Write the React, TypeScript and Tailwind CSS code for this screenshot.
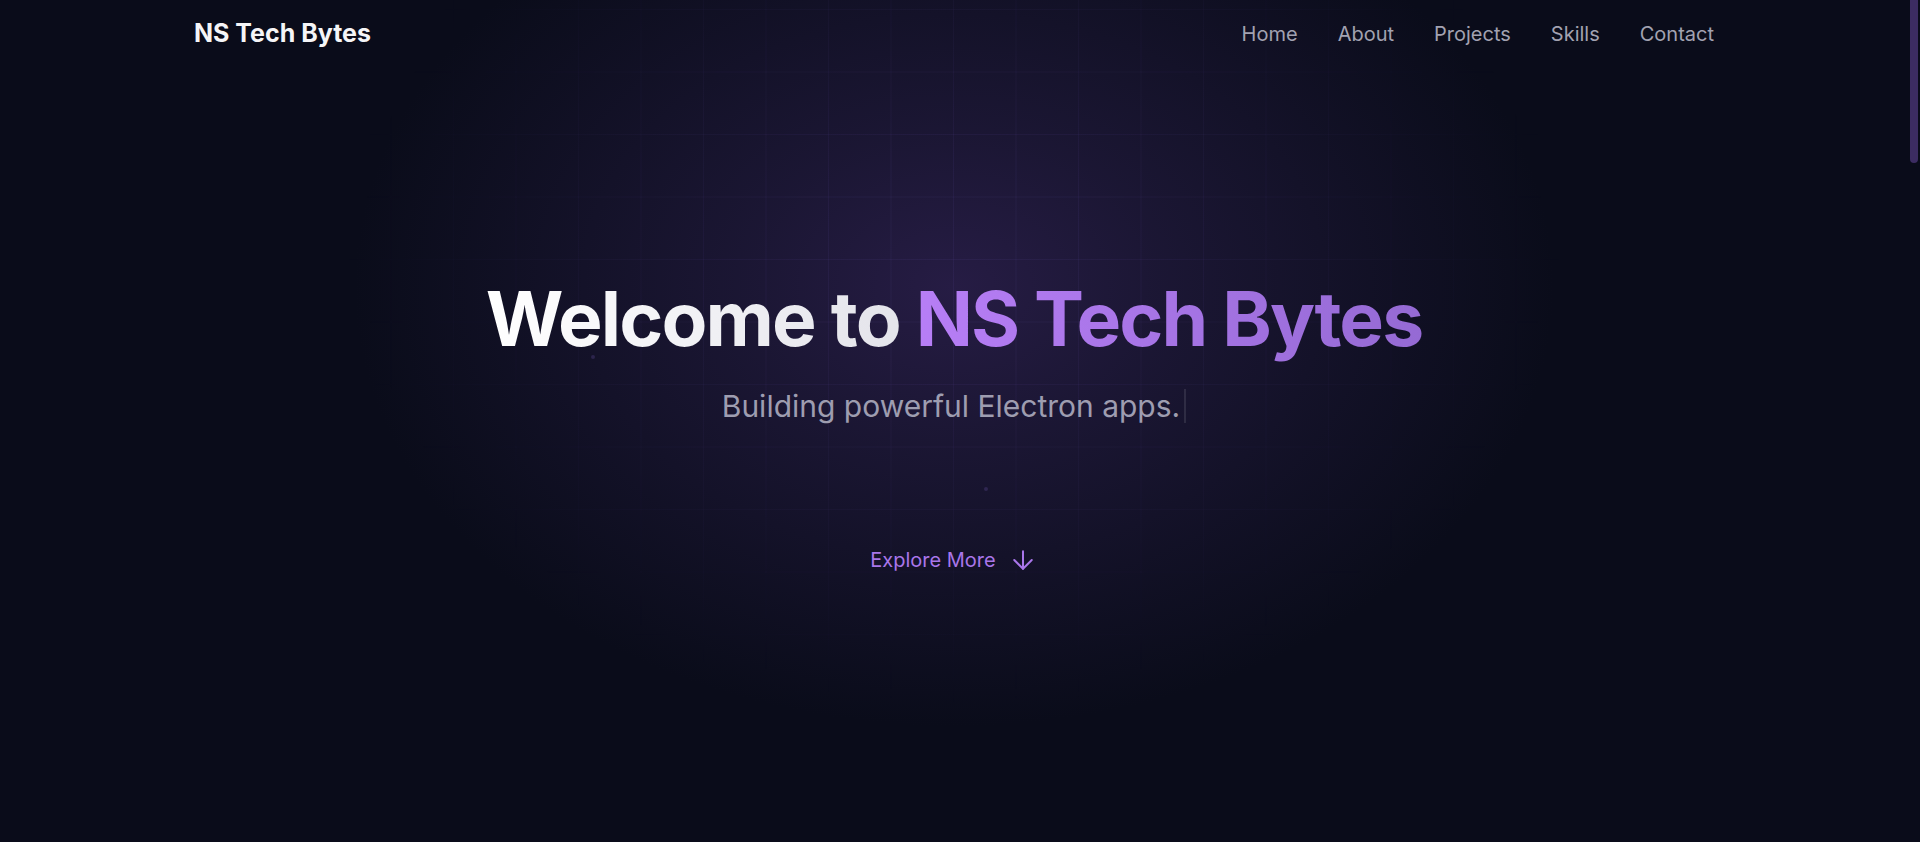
import React from 'react';
import { ArrowDown } from 'lucide-react';

const links = ['Home', 'About', 'Projects', 'Skills', 'Contact'];

// Puntitos decorativos del fondo (muy tenues)
const dots = [
    { top: 'top-[487px]', left: 'left-[984px]' },
    { top: 'top-[355px]', left: 'left-[591px]' },
];

export default function App() {
    return (
        <div className="flex h-screen bg-[#0a0c1a] font-['Inter',sans-serif] text-white">

            <main className="flex-1 overflow-y-auto [scrollbar-width:none]">

                {/* --- HERO --- */}
                <section id="home" className="relative h-[842px] overflow-hidden flex flex-col items-center justify-center pt-[11px]">

                    {/* Resplandor violeta */}
                    <div className="absolute inset-0 pointer-events-none bg-[radial-gradient(ellipse_600px_440px_at_50%_34%,rgba(38,28,68,1)_0%,rgba(30,24,56,0.85)_35%,rgba(10,12,26,0)_100%)]"></div>

                    {/* Rejilla sutil */}
                    <div className="absolute inset-0 pointer-events-none bg-[linear-gradient(rgba(139,110,230,0.07)_1px,transparent_1px),linear-gradient(90deg,rgba(139,110,230,0.07)_1px,transparent_1px)] bg-[size:62.5px_62.5px] bg-[position:15.5px_9px] [mask-image:radial-gradient(ellipse_620px_460px_at_50%_30%,black_20%,transparent_100%)]"></div>

                    {dots.map((d, i) => (
                        <span key={i} className={`absolute ${d.top} ${d.left} w-[4px] h-[4px] rounded-full bg-[#8b6fd6]/20 pointer-events-none`}></span>
                    ))}

                    {/* Navegación */}
                    <header className="absolute top-0 left-0 right-0 z-10">
                        <nav className="max-w-[1536px] mx-auto px-2 h-[68px] flex items-center justify-between">
                            <a href="#home" className="text-[25px] font-bold text-[#f5f5f7]">NS Tech Bytes</a>
                            <ul className="flex items-center gap-10">
                                {links.map((l) => (
                                    <li key={l}>
                                        <a href={`#${l.toLowerCase()}`} className="text-xl text-[#a2a2b1]">{l}</a>
                                    </li>
                                ))}
                            </ul>
                        </nav>
                    </header>

                    {/* Contenido central */}
                    <div className="relative z-10 flex flex-col items-center text-center">
                        <h1 className="text-[75px] leading-[1.1] font-bold tracking-[-0.025em]">
                            <span className="bg-gradient-to-r from-white to-[#e3e3ea] bg-clip-text text-transparent">Welcome to </span>
                            <span className="bg-gradient-to-r from-[#b77ef6] to-[#956ad4] bg-clip-text text-transparent">NS Tech Bytes</span>
                        </h1>
                        <p className="mt-7 text-3xl text-[#9e9db0] flex items-center">
                            Building powerful Electron apps.
                            <span className="inline-block ml-1 w-[2px] h-[34px] bg-white/10"></span>
                        </p>
                        <a href="#about" className="mt-[121px] flex items-center gap-3 text-xl text-[#a976ea]">
                            Explore More
                            <ArrowDown size={30} strokeWidth={1.6} />
                        </a>
                    </div>
                </section>

                {/* Secciones siguientes */}
                <section id="about" className="h-[877px]"></section>
                <section id="projects" className="h-[877px]"></section>
                <section id="skills" className="h-[877px]"></section>
                <section id="contact" className="h-[877px]"></section>
            </main>

            {/* Indicador de desplazamiento */}
            <aside className="w-3 shrink-0 bg-[#0a0c1a] pl-[2px]">
                <div className="w-2 h-[163px] rounded-b-full bg-[#3c2c62]"></div>
            </aside>
        </div>
    );
}
